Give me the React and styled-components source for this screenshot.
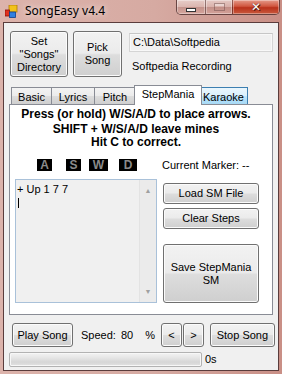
import React from "react";
import styled, { createGlobalStyle, css } from "styled-components";

const Global = createGlobalStyle`
  html, body { margin: 0; padding: 0; }
  body { background: #d2a59d; overflow: hidden; }
  * { box-sizing: border-box; }
`;

const Window = styled.div`
  width: 282px;
  height: 374px;
  display: flex;
  flex-direction: column;
  background: linear-gradient(90deg, #dcb3ab 0%, #d6aaa2 55%, #c98f86 100%);
  font-family: "Liberation Sans", Arial, sans-serif;
  font-size: 11px;
  color: #000;
`;

const TitleBar = styled.div`
  height: 22px;
  display: flex;
  align-items: flex-start;
  flex-shrink: 0;
`;

const AppIcon = styled.svg`
  margin: 5px 0 0 5px;
  flex-shrink: 0;
`;

const Title = styled.div`
  font-family: "Noto Sans", "Open Sans", sans-serif;
  font-size: 12px;
  line-height: 16px;
  margin: 3px 0 0 7px;
  color: #000;
  text-shadow: 0 0 6px rgba(255, 255, 255, 0.9);
`;

const Caption = styled.div`
  margin-left: auto;
  margin-right: 2px;
  display: flex;
  height: 15px;
  border: 1px solid rgba(60, 30, 30, 0.7);
  border-top: none;
  border-radius: 0 0 5px 5px;
  overflow: hidden;
`;

const CapBtn = styled.div`
  width: ${(p) => p.$w}px;
  height: 100%;
  display: flex;
  align-items: center;
  justify-content: center;
  border-left: ${(p) => (p.$first ? "none" : "1px solid rgba(70,40,40,0.5)")};
  background: ${(p) =>
    p.$close
      ? "linear-gradient(#e59a8a 0%, #d0563f 45%, #b9311b 55%, #c95a3e 100%)"
      : "linear-gradient(rgba(255,255,255,0.45) 0%, rgba(255,255,255,0.2) 50%, rgba(150,100,95,0.25) 50%, rgba(220,170,160,0.4) 100%)"};
  box-shadow: inset 0 0 0 1px rgba(255, 255, 255, 0.35);
`;

const CapMin = styled.div`
  width: 10px;
  height: 4px;
  margin-top: 5px;
  background: #fff;
  border: 1px solid #333;
`;

const CapMax = styled.div`
  width: 11px;
  height: 8px;
  border: 1px solid rgba(90, 60, 60, 0.5);
  box-shadow: inset 0 2px 0 rgba(255, 255, 255, 0.5);
  opacity: 0.8;
`;

const CapX = styled.div`
  color: #fff;
  font-family: "DejaVu Sans", sans-serif;
  font-weight: bold;
  font-size: 12px;
  line-height: 12px;
  text-shadow: 0 0 1px #400, 1px 1px 0 #5a1a10;
`;

const Client = styled.div`
  flex: 1;
  margin: 0 3px 3px 3px;
  border: 1px solid #5a3c3c;
  background: #f0f0f0;
  padding: 8px 5px 0 5px;
  display: flex;
  flex-direction: column;
`;

const Button = styled.div`
  width: ${(p) => p.$w}px;
  height: ${(p) => p.$h}px;
  flex-shrink: 0;
  border: 1px solid #707070;
  border-radius: 3px;
  background: linear-gradient(#f2f2f2 0%, #ebebeb 48%, #dddddd 52%, #cfcfcf 100%);
  box-shadow: inset 0 0 0 1px #fbfbfb;
  display: flex;
  align-items: center;
  justify-content: center;
  text-align: center;
  line-height: 13px;
  font-size: 11px;
  color: #000;
`;

const TopRow = styled.div`
  display: flex;
  padding-left: 1px;
  gap: 5px;
`;

const InfoCol = styled.div`
  margin-left: 2px;
  display: flex;
  flex-direction: column;
`;

const TextBox = styled.div`
  width: 144px;
  height: 19px;
  margin-top: 2px;
  border: 1px solid #d5d5d5;
  border-top-color: #c6c6c6;
  box-shadow: inset 0 0 0 1px #f8f8f8;
  padding: 2px 0 0 3px;
  font-size: 11px;
  line-height: 13px;
`;

const Label = styled.div`
  font-size: 11px;
  line-height: 13px;
  margin-top: ${(p) => p.$mt || 0}px;
  margin-left: ${(p) => p.$ml || 0}px;
  white-space: nowrap;
`;

const Gap = styled.div`
  width: ${(p) => p.$w || 0}px;
  height: ${(p) => p.$h || 0}px;
  flex-shrink: 0;
`;

const TabStrip = styled.div`
  margin-top: 8px;
  height: 19px;
  display: flex;
  align-items: flex-end;
  padding-left: 3px;
  position: relative;
  z-index: 1;
`;

const Tab = styled.div`
  width: ${(p) => p.$w}px;
  height: 17px;
  border: 1px solid #898c95;
  border-bottom: none;
  margin-left: -1px;
  background: linear-gradient(#f3f3f3 0%, #ebebeb 50%, #dddddd 51%, #cfcfcf 100%);
  display: flex;
  align-items: center;
  justify-content: center;
  font-size: 11px;
  padding-top: 1px;
  ${(p) =>
    p.$hover &&
    css`
      border-color: #3c7fb1;
      background: linear-gradient(#eaf6fd 0%, #d9f0fc 50%, #bee6fd 51%, #a7d9f5 100%);
    `}
  ${(p) =>
    p.$active &&
    css`
      height: 20px;
      margin: 0 -2px -1px -2px;
      background: #fff;
      position: relative;
      z-index: 2;
      align-items: flex-start;
      padding-top: 2px;
    `}
`;

const Panel = styled.div`
  height: 211px;
  width: 264px;
  border: 1px solid #898c95;
  background: #fff;
  display: flex;
  flex-direction: column;
`;

const Instructions = styled.div`
  margin-top: 3px;
  padding-right: 10px;
  text-align: center;
  font-weight: bold;
  font-size: 12px;
  line-height: 13px;
  white-space: nowrap;
`;

const KeysRow = styled.div`
  margin-top: 10px;
  height: 12px;
  display: flex;
  align-items: center;
  padding-left: 27px;
`;

const Key = styled.div`
  width: ${(p) => p.$w}px;
  height: 12px;
  margin-left: ${(p) => p.$ml || 0}px;
  background: #000;
  color: #8a8a8a;
  font-weight: bold;
  font-size: 12px;
  line-height: 12px;
  text-align: center;
`;

const MainRow = styled.div`
  margin-top: 8px;
  display: flex;
  padding-left: 5px;
`;

const ListBox = styled.div`
  width: 142px;
  height: 124px;
  border: 1px solid #a9c1d9;
  background: #f0f0f0;
  display: flex;
`;

const ListText = styled.div`
  flex: 1;
  padding: 2px 0 0 1px;
  font-size: 11px;
  line-height: 14px;
`;

const Caret = styled.div`
  width: 1px;
  height: 10px;
  margin: 2px 0 0 1px;
  background: #000;
`;

const ScrollBar = styled.div`
  width: 17px;
  border-left: 1px solid #e3e3e3;
  background: #ebebeb;
  display: flex;
  flex-direction: column;
  justify-content: space-between;
  align-items: center;
  padding: 7px 0 7px;
  color: #a0a0a0;
  font-size: 7px;
  line-height: 7px;
`;

const ButtonCol = styled.div`
  margin-left: 6px;
  display: flex;
  flex-direction: column;
  padding-top: 4px;
`;

const BottomRow = styled.div`
  margin-top: 8px;
  display: flex;
  align-items: center;
  padding-left: 3px;
`;

const ProgressRow = styled.div`
  margin-top: 5px;
  display: flex;
  align-items: center;
`;

const Progress = styled.div`
  width: 193px;
  height: 15px;
  border: 1px solid #b2b2b2;
  border-radius: 2px;
  background: linear-gradient(#f3f3f3 0%, #e6e6e6 35%, #d6d6d6 70%, #e2e2e2 100%);
  box-shadow: inset 0 0 0 1px #f7f7f7;
`;

export default function App() {
  return (
    <>
      <Global />
      <Window>
        <TitleBar>
          <AppIcon width="13" height="13" viewBox="0 0 13 13">
            <rect x="4" y="0" width="8" height="7" fill="#f2c21b" stroke="#b07a00" strokeWidth="0.8" />
            <rect x="0" y="5" width="4.5" height="6" fill="#e0301e" stroke="#8a1208" strokeWidth="0.8" />
            <rect x="4.5" y="7" width="6" height="5.5" fill="#2f7fe0" stroke="#10408a" strokeWidth="0.8" />
          </AppIcon>
          <Title>SongEasy v4.4</Title>
          <Caption>
            <CapBtn $w={28} $first>
              <CapMin />
            </CapBtn>
            <CapBtn $w={27}>
              <CapMax />
            </CapBtn>
            <CapBtn $w={47} $close>
              <CapX>✕</CapX>
            </CapBtn>
          </Caption>
        </TitleBar>
        <Client>
          <TopRow>
            <Button $w={58} $h={46}>
              Set
              <br />
              "Songs"
              <br />
              Directory
            </Button>
            <Button $w={49} $h={46}>
              Pick
              <br />
              Song
            </Button>
            <InfoCol>
              <TextBox>C:\Data\Softpedia</TextBox>
              <Label $mt={8} $ml={3}>
                Softpedia Recording
              </Label>
            </InfoCol>
          </TopRow>
          <TabStrip>
            <Tab $w={41}>Basic</Tab>
            <Tab $w={44}>Lyrics</Tab>
            <Tab $w={42}>Pitch</Tab>
            <Tab $w={68} $active>
              StepMania
            </Tab>
            <Tab $w={49} $hover>
              Karaoke
            </Tab>
          </TabStrip>
          <Panel>
            <Instructions>
              <div>Press (or hold) W/S/A/D to place arrows.</div>
              <Gap $h={2} />
              <div>SHIFT + W/S/A/D leave mines</div>
              <div>Hit C to correct.</div>
            </Instructions>
            <KeysRow>
              <Key $w={15}>A</Key>
              <Key $w={15} $ml={14}>S</Key>
              <Key $w={19} $ml={8}>W</Key>
              <Key $w={18} $ml={11}>D</Key>
              <Label $ml={25}>Current Marker: --</Label>
            </KeysRow>
            <MainRow>
              <ListBox>
                <ListText>
                  + Up 1 7 7
                  <Caret />
                </ListText>
                <ScrollBar>
                  <span>▲</span>
                  <span>▼</span>
                </ScrollBar>
              </ListBox>
              <ButtonCol>
                <Button $w={96} $h={21}>
                  Load SM File
                </Button>
                <Gap $h={4} />
                <Button $w={96} $h={21}>
                  Clear Steps
                </Button>
                <Gap $h={15} />
                <Button $w={96} $h={59}>
                  Save StepMania
                  <br />
                  SM
                </Button>
              </ButtonCol>
            </MainRow>
          </Panel>
          <BottomRow>
            <Button $w={61} $h={24}>
              Play Song
            </Button>
            <Label $ml={8}>Speed:</Label>
            <Label $ml={5}>80</Label>
            <Label $ml={12}>%</Label>
            <Gap $w={6} />
            <Button $w={21} $h={24}>
              &lt;
            </Button>
            <Gap $w={1} />
            <Button $w={21} $h={24}>
              &gt;
            </Button>
            <Gap $w={6} />
            <Button $w={65} $h={24}>
              Stop Song
            </Button>
          </BottomRow>
          <ProgressRow>
            <Progress />
            <Label $ml={3}>0s</Label>
          </ProgressRow>
        </Client>
      </Window>
    </>
  );
}
